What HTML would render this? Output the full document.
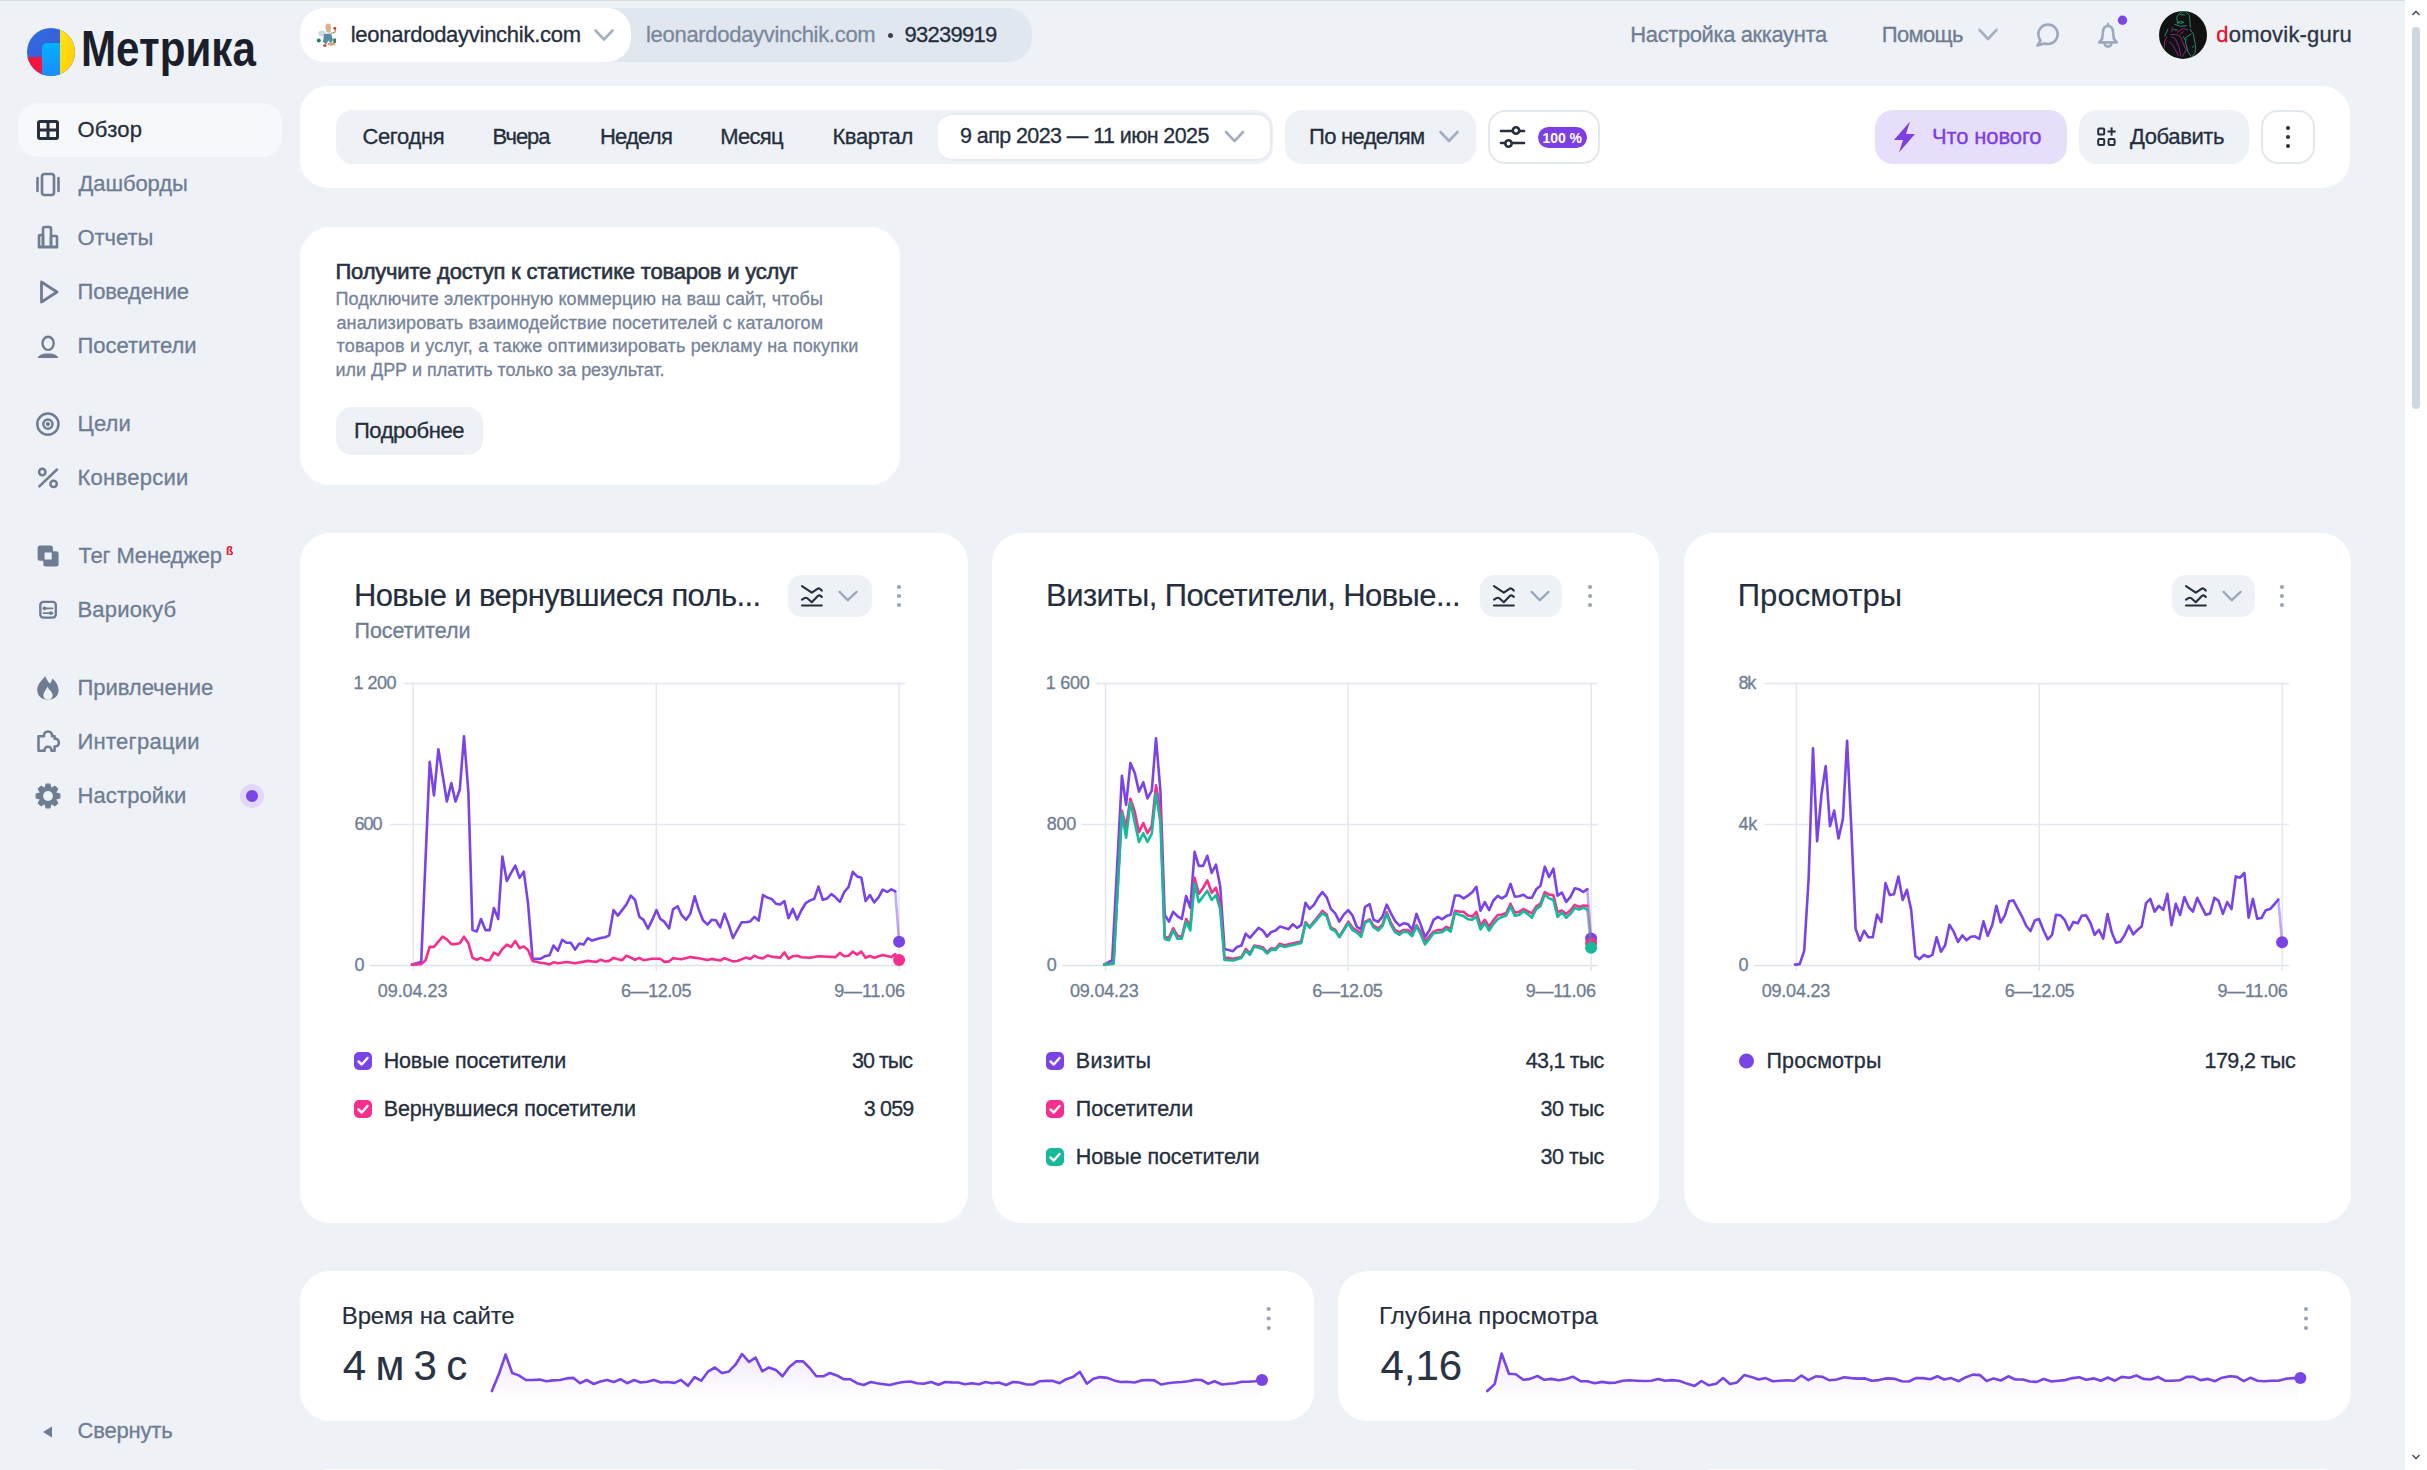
<!DOCTYPE html>
<html><head><meta charset="utf-8"><title>Метрика</title><style>
*{margin:0;padding:0;box-sizing:border-box}
html,body{width:2427px;height:1470px;overflow:hidden;background:#eef1f6;font-family:"Liberation Sans", sans-serif}
.t{position:absolute;white-space:nowrap}
svg.full{position:absolute;left:0;top:0;width:2427px;height:1470px}
</style></head>
<body>
<div style="position:absolute;left:0px;top:0px;width:2405px;height:1px;background:#d6dce6;border-radius:0px;"></div>
<div style="position:absolute;left:2405px;top:0px;width:22px;height:1470px;background:#ffffff;border-radius:0px;"></div>
<div style="position:absolute;left:2412px;top:27px;width:8px;height:382px;background:#cfd8e1;border-radius:4px;"></div>
<div style="position:absolute;left:18px;top:103px;width:264px;height:54px;background:#f7f8fb;border-radius:20px;"></div>
<div class="t" style="left:77.50px;top:118.60px;font-size:22px;line-height:22px;color:#252e3d;font-weight:400;letter-spacing:0.249px;-webkit-text-stroke-width:0.3px;">Обзор</div>
<div class="t" style="left:78.50px;top:172.60px;font-size:22px;line-height:22px;color:#6f7d93;font-weight:400;letter-spacing:-0.112px;-webkit-text-stroke-width:0.3px;">Дашборды</div>
<div class="t" style="left:77.50px;top:226.60px;font-size:22px;line-height:22px;color:#6f7d93;font-weight:400;letter-spacing:-0.066px;-webkit-text-stroke-width:0.3px;">Отчеты</div>
<div class="t" style="left:77.50px;top:280.60px;font-size:22px;line-height:22px;color:#6f7d93;font-weight:400;letter-spacing:-0.181px;-webkit-text-stroke-width:0.3px;">Поведение</div>
<div class="t" style="left:77.50px;top:334.60px;font-size:22px;line-height:22px;color:#6f7d93;font-weight:400;letter-spacing:-0.032px;-webkit-text-stroke-width:0.3px;">Посетители</div>
<div class="t" style="left:77.50px;top:412.60px;font-size:22px;line-height:22px;color:#6f7d93;font-weight:400;letter-spacing:0.128px;-webkit-text-stroke-width:0.3px;">Цели</div>
<div class="t" style="left:77.50px;top:466.60px;font-size:22px;line-height:22px;color:#6f7d93;font-weight:400;letter-spacing:0.275px;-webkit-text-stroke-width:0.3px;">Конверсии</div>
<div class="t" style="left:78.50px;top:544.60px;font-size:22px;line-height:22px;color:#6f7d93;font-weight:400;letter-spacing:-0.161px;-webkit-text-stroke-width:0.3px;">Тег Менеджер</div>
<div class="t" style="left:77.50px;top:598.60px;font-size:22px;line-height:22px;color:#6f7d93;font-weight:400;letter-spacing:0.173px;-webkit-text-stroke-width:0.3px;">Вариокуб</div>
<div class="t" style="left:77.50px;top:676.60px;font-size:22px;line-height:22px;color:#6f7d93;font-weight:400;letter-spacing:-0.040px;-webkit-text-stroke-width:0.3px;">Привлечение</div>
<div class="t" style="left:77.50px;top:730.60px;font-size:22px;line-height:22px;color:#6f7d93;font-weight:400;letter-spacing:0.265px;-webkit-text-stroke-width:0.3px;">Интеграции</div>
<div class="t" style="left:77.50px;top:784.60px;font-size:22px;line-height:22px;color:#6f7d93;font-weight:400;letter-spacing:0.115px;-webkit-text-stroke-width:0.3px;">Настройки</div>
<div class="t" style="left:77.50px;top:1420.30px;font-size:22px;line-height:22px;color:#6f7d93;font-weight:400;letter-spacing:-0.189px;-webkit-text-stroke-width:0.3px;">Свернуть</div>
<div class="t" style="left:226.00px;top:544.80px;font-size:12px;line-height:12px;color:#e0102a;font-weight:700;letter-spacing:0.000px;-webkit-text-stroke-width:0px;">ß</div>
<div style="position:absolute;left:240px;top:784px;width:24px;height:24px;border-radius:12px;background:#e3d8fb"></div>
<div style="position:absolute;left:246px;top:790px;width:12px;height:12px;border-radius:6px;background:#7b45e8"></div>
<div class="t" style="left:81.07px;top:23.50px;font-size:50px;line-height:50px;font-weight:700;color:#1b1f2b;transform:scaleX(0.843);transform-origin:0 0">Метрика</div>
<div style="position:absolute;left:300px;top:8px;width:732px;height:54px;background:#e1e7ef;border-radius:24px;"></div>
<div style="position:absolute;left:300px;top:8px;width:331px;height:54px;background:#ffffff;border-radius:24px;"></div>
<div class="t" style="left:350.70px;top:23.60px;font-size:22px;line-height:22px;color:#252e3d;font-weight:400;letter-spacing:-0.271px;-webkit-text-stroke-width:0.3px;">leonardodayvinchik.com</div>
<div class="t" style="left:646.00px;top:23.60px;font-size:22px;line-height:22px;color:#7b889c;font-weight:400;letter-spacing:-0.304px;-webkit-text-stroke-width:0.3px;">leonardodayvinchik.com</div>
<div style="position:absolute;left:887.5px;top:33px;width:5px;height:5px;border-radius:3px;background:#3a4252"></div>
<div class="t" style="left:904.40px;top:23.60px;font-size:22px;line-height:22px;color:#252e3d;font-weight:400;letter-spacing:-0.735px;-webkit-text-stroke-width:0.3px;">93239919</div>
<div class="t" style="left:1630.30px;top:23.60px;font-size:22px;line-height:22px;color:#6f7d93;font-weight:400;letter-spacing:-0.397px;-webkit-text-stroke-width:0.3px;">Настройка аккаунта</div>
<div class="t" style="left:1881.80px;top:23.60px;font-size:22px;line-height:22px;color:#6f7d93;font-weight:400;letter-spacing:-0.662px;-webkit-text-stroke-width:0.3px;">Помощь</div>
<div class="t" style="left:2216.30px;top:23.60px;font-size:22px;line-height:22px;color:#2b3444;font-weight:400;letter-spacing:0.196px;-webkit-text-stroke-width:0.3px;"><span style="color:#e3102c">d</span>omovik-guru</div>
<div style="position:absolute;left:300px;top:86px;width:2050px;height:102px;background:#ffffff;border-radius:28px;"></div>
<div style="position:absolute;left:336px;top:110px;width:937px;height:54px;background:#eef1f6;border-radius:17px;"></div>
<div style="position:absolute;left:938px;top:113px;width:334px;height:48px;background:#fff;border-radius:15px;border:2px solid #e6eaf1;border-left:none"></div>
<div class="t" style="left:362.40px;top:125.90px;font-size:22px;line-height:22px;color:#252e3d;font-weight:400;letter-spacing:-0.334px;-webkit-text-stroke-width:0.3px;">Сегодня</div>
<div class="t" style="left:492.60px;top:125.90px;font-size:22px;line-height:22px;color:#252e3d;font-weight:400;letter-spacing:-1.044px;-webkit-text-stroke-width:0.3px;">Вчера</div>
<div class="t" style="left:600.00px;top:125.90px;font-size:22px;line-height:22px;color:#252e3d;font-weight:400;letter-spacing:-0.784px;-webkit-text-stroke-width:0.3px;">Неделя</div>
<div class="t" style="left:720.30px;top:125.90px;font-size:22px;line-height:22px;color:#252e3d;font-weight:400;letter-spacing:-0.755px;-webkit-text-stroke-width:0.3px;">Месяц</div>
<div class="t" style="left:832.40px;top:125.90px;font-size:22px;line-height:22px;color:#252e3d;font-weight:400;letter-spacing:-0.368px;-webkit-text-stroke-width:0.3px;">Квартал</div>
<div class="t" style="left:960.00px;top:126.12px;font-size:21.5px;line-height:21.5px;color:#252e3d;font-weight:400;letter-spacing:-0.582px;-webkit-text-stroke-width:0.3px;">9 апр 2023 — 11 июн 2025</div>
<div style="position:absolute;left:1285px;top:110px;width:191px;height:54px;background:#eef1f6;border-radius:17px;"></div>
<div class="t" style="left:1309.00px;top:125.90px;font-size:22px;line-height:22px;color:#252e3d;font-weight:400;letter-spacing:-0.684px;-webkit-text-stroke-width:0.3px;">По неделям</div>
<div style="position:absolute;left:1488px;top:110px;width:112px;height:54px;border-radius:17px;border:2px solid #e3e7ee;background:#fff"></div>
<div style="position:absolute;left:1538px;top:127px;width:49px;height:21px;border-radius:11px;background:#7b3fe4"></div>
<div class="t" style="left:1542.50px;top:130.90px;font-size:14px;line-height:14px;color:#ffffff;font-weight:700;letter-spacing:-0.062px;-webkit-text-stroke-width:0px;">100 %</div>
<div style="position:absolute;left:1875px;top:110px;width:192px;height:54px;background:#e7defb;border-radius:18px;"></div>
<div class="t" style="left:1932.00px;top:126.10px;font-size:22px;line-height:22px;color:#7c3fe4;font-weight:400;letter-spacing:-0.127px;-webkit-text-stroke-width:0.3px;-webkit-text-stroke:0.35px #7c3fe4;">Что нового</div>
<div style="position:absolute;left:2079px;top:110px;width:170px;height:54px;background:#eef1f6;border-radius:18px;"></div>
<div class="t" style="left:2130.00px;top:125.90px;font-size:22px;line-height:22px;color:#252e3d;font-weight:400;letter-spacing:-0.395px;-webkit-text-stroke-width:0.3px;">Добавить</div>
<div style="position:absolute;left:2261px;top:110px;width:54px;height:54px;border-radius:17px;border:2px solid #e3e7ee;background:#fff"></div>
<div style="position:absolute;left:300px;top:227px;width:600px;height:258px;background:#ffffff;border-radius:30px;"></div>
<div class="t" style="left:335.50px;top:260.60px;font-size:22px;line-height:22px;color:#2a3342;font-weight:400;letter-spacing:-0.198px;-webkit-text-stroke-width:0.3px;-webkit-text-stroke:0.6px #2a3342;">Получите доступ к статистике товаров и услуг</div>
<div class="t" style="left:335.50px;top:289.70px;font-size:18px;line-height:18px;color:#76839a;font-weight:400;letter-spacing:0.114px;-webkit-text-stroke-width:0.3px;">Подключите электронную коммерцию на ваш сайт, чтобы</div>
<div class="t" style="left:336.50px;top:313.50px;font-size:18px;line-height:18px;color:#76839a;font-weight:400;letter-spacing:0.104px;-webkit-text-stroke-width:0.3px;">анализировать взаимодействие посетителей с каталогом</div>
<div class="t" style="left:336.50px;top:337.30px;font-size:18px;line-height:18px;color:#76839a;font-weight:400;letter-spacing:0.175px;-webkit-text-stroke-width:0.3px;">товаров и услуг, а также оптимизировать рекламу на покупки</div>
<div class="t" style="left:335.50px;top:361.10px;font-size:18px;line-height:18px;color:#76839a;font-weight:400;letter-spacing:-0.033px;-webkit-text-stroke-width:0.3px;">или ДРР и платить только за результат.</div>
<div style="position:absolute;left:336px;top:407px;width:147px;height:48px;background:#eef1f6;border-radius:16px;"></div>
<div class="t" style="left:354.00px;top:419.70px;font-size:22px;line-height:22px;color:#252e3d;font-weight:400;letter-spacing:-0.457px;-webkit-text-stroke-width:0.3px;">Подробнее</div>
<div style="position:absolute;left:300px;top:533px;width:668px;height:690px;background:#ffffff;border-radius:30px;"></div>
<div class="t" style="left:353.90px;top:579.65px;font-size:31px;line-height:31px;color:#252e3d;font-weight:400;letter-spacing:-0.634px;-webkit-text-stroke-width:0.15px;">Новые и вернувшиеся поль...</div>
<div class="t" style="left:354.50px;top:620.93px;font-size:21.5px;line-height:21.5px;color:#6f7d93;font-weight:400;letter-spacing:-0.073px;-webkit-text-stroke-width:0.3px;">Посетители</div>
<div style="position:absolute;left:788px;top:575px;width:84px;height:42px;background:#eef1f6;border-radius:14px;"></div>
<div class="t" style="left:353.60px;top:673.50px;font-size:18px;line-height:18px;color:#6f7d93;font-weight:400;letter-spacing:-0.533px;-webkit-text-stroke-width:0.3px;">1 200</div>
<div class="t" style="left:354.60px;top:814.50px;font-size:18px;line-height:18px;color:#6f7d93;font-weight:400;letter-spacing:-1.061px;-webkit-text-stroke-width:0.3px;">600</div>
<div class="t" style="left:354.60px;top:955.50px;font-size:18px;line-height:18px;color:#6f7d93;font-weight:400;letter-spacing:-0.300px;-webkit-text-stroke-width:0.3px;">0</div>
<div class="t" style="left:383.70px;top:1050.92px;font-size:21.5px;line-height:21.5px;color:#252e3d;font-weight:400;letter-spacing:-0.176px;-webkit-text-stroke-width:0.3px;">Новые посетители</div>
<div class="t" style="left:852.10px;top:1050.92px;font-size:21.5px;line-height:21.5px;color:#252e3d;font-weight:400;letter-spacing:-0.998px;-webkit-text-stroke-width:0.3px;">30 тыс</div>
<div class="t" style="left:383.70px;top:1098.92px;font-size:21.5px;line-height:21.5px;color:#252e3d;font-weight:400;letter-spacing:-0.120px;-webkit-text-stroke-width:0.3px;">Вернувшиеся посетители</div>
<div class="t" style="left:863.80px;top:1098.92px;font-size:21.5px;line-height:21.5px;color:#252e3d;font-weight:400;letter-spacing:-0.836px;-webkit-text-stroke-width:0.3px;">3 059</div>
<div class="t" style="left:377.75px;top:981.50px;font-size:18px;line-height:18px;color:#6f7d93;font-weight:400;letter-spacing:-0.051px;-webkit-text-stroke-width:0.3px;">09.04.23</div>
<div class="t" style="left:621.00px;top:981.50px;font-size:18px;line-height:18px;color:#6f7d93;font-weight:400;letter-spacing:-0.441px;-webkit-text-stroke-width:0.3px;">6—12.05</div>
<div class="t" style="left:834.20px;top:981.50px;font-size:18px;line-height:18px;color:#6f7d93;font-weight:400;letter-spacing:-0.151px;-webkit-text-stroke-width:0.3px;">9—11.06</div>
<div style="position:absolute;left:992px;top:533px;width:667px;height:690px;background:#ffffff;border-radius:30px;"></div>
<div class="t" style="left:1046.10px;top:579.65px;font-size:31px;line-height:31px;color:#252e3d;font-weight:400;letter-spacing:-0.578px;-webkit-text-stroke-width:0.15px;">Визиты, Посетители, Новые...</div>
<div style="position:absolute;left:1480px;top:575px;width:82px;height:42px;background:#eef1f6;border-radius:14px;"></div>
<div class="t" style="left:1045.80px;top:673.50px;font-size:18px;line-height:18px;color:#6f7d93;font-weight:400;letter-spacing:-0.300px;-webkit-text-stroke-width:0.3px;">1 600</div>
<div class="t" style="left:1046.80px;top:814.50px;font-size:18px;line-height:18px;color:#6f7d93;font-weight:400;letter-spacing:-0.300px;-webkit-text-stroke-width:0.3px;">800</div>
<div class="t" style="left:1046.80px;top:955.50px;font-size:18px;line-height:18px;color:#6f7d93;font-weight:400;letter-spacing:-0.300px;-webkit-text-stroke-width:0.3px;">0</div>
<div class="t" style="left:1075.70px;top:1050.92px;font-size:21.5px;line-height:21.5px;color:#252e3d;font-weight:400;letter-spacing:0.367px;-webkit-text-stroke-width:0.3px;">Визиты</div>
<div class="t" style="left:1525.80px;top:1050.92px;font-size:21.5px;line-height:21.5px;color:#252e3d;font-weight:400;letter-spacing:-0.760px;-webkit-text-stroke-width:0.3px;">43,1 тыс</div>
<div class="t" style="left:1075.70px;top:1098.92px;font-size:21.5px;line-height:21.5px;color:#252e3d;font-weight:400;letter-spacing:0.094px;-webkit-text-stroke-width:0.3px;">Посетители</div>
<div class="t" style="left:1540.41px;top:1098.92px;font-size:21.5px;line-height:21.5px;color:#252e3d;font-weight:400;letter-spacing:-0.400px;-webkit-text-stroke-width:0.3px;">30 тыс</div>
<div class="t" style="left:1075.70px;top:1146.92px;font-size:21.5px;line-height:21.5px;color:#252e3d;font-weight:400;letter-spacing:-0.089px;-webkit-text-stroke-width:0.3px;">Новые посетители</div>
<div class="t" style="left:1540.41px;top:1146.92px;font-size:21.5px;line-height:21.5px;color:#252e3d;font-weight:400;letter-spacing:-0.400px;-webkit-text-stroke-width:0.3px;">30 тыс</div>
<div class="t" style="left:1069.95px;top:981.50px;font-size:18px;line-height:18px;color:#6f7d93;font-weight:400;letter-spacing:-0.194px;-webkit-text-stroke-width:0.3px;">09.04.23</div>
<div class="t" style="left:1312.35px;top:981.50px;font-size:18px;line-height:18px;color:#6f7d93;font-weight:400;letter-spacing:-0.424px;-webkit-text-stroke-width:0.3px;">6—12.05</div>
<div class="t" style="left:1525.70px;top:981.50px;font-size:18px;line-height:18px;color:#6f7d93;font-weight:400;letter-spacing:-0.235px;-webkit-text-stroke-width:0.3px;">9—11.06</div>
<div style="position:absolute;left:1684px;top:533px;width:667px;height:690px;background:#ffffff;border-radius:30px;"></div>
<div class="t" style="left:1737.80px;top:579.65px;font-size:31px;line-height:31px;color:#252e3d;font-weight:400;letter-spacing:0.041px;-webkit-text-stroke-width:0.15px;">Просмотры</div>
<div style="position:absolute;left:2172px;top:575px;width:83px;height:42px;background:#eef1f6;border-radius:14px;"></div>
<div class="t" style="left:1738.50px;top:673.50px;font-size:18px;line-height:18px;color:#6f7d93;font-weight:400;letter-spacing:-1.311px;-webkit-text-stroke-width:0.3px;">8k</div>
<div class="t" style="left:1738.50px;top:814.50px;font-size:18px;line-height:18px;color:#6f7d93;font-weight:400;letter-spacing:-0.300px;-webkit-text-stroke-width:0.3px;">4k</div>
<div class="t" style="left:1738.50px;top:955.50px;font-size:18px;line-height:18px;color:#6f7d93;font-weight:400;letter-spacing:-0.300px;-webkit-text-stroke-width:0.3px;">0</div>
<div class="t" style="left:1766.40px;top:1050.92px;font-size:21.5px;line-height:21.5px;color:#252e3d;font-weight:400;letter-spacing:0.164px;-webkit-text-stroke-width:0.3px;">Просмотры</div>
<div class="t" style="left:2204.50px;top:1050.92px;font-size:21.5px;line-height:21.5px;color:#252e3d;font-weight:400;letter-spacing:-0.572px;-webkit-text-stroke-width:0.3px;">179,2 тыс</div>
<div class="t" style="left:1761.65px;top:981.50px;font-size:18px;line-height:18px;color:#6f7d93;font-weight:400;letter-spacing:-0.194px;-webkit-text-stroke-width:0.3px;">09.04.23</div>
<div class="t" style="left:2004.80px;top:981.50px;font-size:18px;line-height:18px;color:#6f7d93;font-weight:400;letter-spacing:-0.541px;-webkit-text-stroke-width:0.3px;">6—12.05</div>
<div class="t" style="left:2217.40px;top:981.50px;font-size:18px;line-height:18px;color:#6f7d93;font-weight:400;letter-spacing:-0.218px;-webkit-text-stroke-width:0.3px;">9—11.06</div>
<div style="position:absolute;left:300px;top:1469px;width:668px;height:131px;background:#ffffff;border-radius:30px;"></div>
<div style="position:absolute;left:992px;top:1469px;width:667px;height:131px;background:#ffffff;border-radius:30px;"></div>
<div style="position:absolute;left:1684px;top:1469px;width:667px;height:131px;background:#ffffff;border-radius:30px;"></div>
<div style="position:absolute;left:300px;top:1271px;width:1014px;height:150px;background:#ffffff;border-radius:30px;"></div>
<div style="position:absolute;left:1338px;top:1271px;width:1013px;height:150px;background:#ffffff;border-radius:30px;"></div>
<div class="t" style="left:341.80px;top:1303.90px;font-size:24px;line-height:24px;color:#252e3d;font-weight:400;letter-spacing:-0.170px;-webkit-text-stroke-width:0.15px;">Время на сайте</div>
<div class="t" style="left:342.80px;top:1345.10px;font-size:42px;line-height:42px;color:#2a3343;font-weight:400;letter-spacing:-1.200px;-webkit-text-stroke-width:0.1px;-webkit-text-stroke-width:0.1px;">4 м 3 с</div>
<div class="t" style="left:1379.00px;top:1303.90px;font-size:24px;line-height:24px;color:#252e3d;font-weight:400;letter-spacing:0.119px;-webkit-text-stroke-width:0.15px;">Глубина просмотра</div>
<div class="t" style="left:1380.50px;top:1345.10px;font-size:42px;line-height:42px;color:#2a3343;font-weight:400;letter-spacing:-0.062px;-webkit-text-stroke-width:0.1px;-webkit-text-stroke-width:0.1px;">4,16</div>
<svg class="full" width="2427" height="1470" viewBox="0 0 2427 1470">
<defs>
<linearGradient id="lgb" x1="0" y1="0" x2="1" y2="1"><stop offset="0" stop-color="#2f6fe6"/><stop offset="1" stop-color="#3f4fc9"/></linearGradient>
<linearGradient id="lgy" x1="0" y1="0" x2="1" y2="1"><stop offset="0" stop-color="#ffe51f"/><stop offset="1" stop-color="#ffc800"/></linearGradient>
<linearGradient id="lgc" x1="0" y1="0" x2="0" y2="1"><stop offset="0" stop-color="#00b2ff"/><stop offset="1" stop-color="#1a8cff"/></linearGradient>
<clipPath id="lc"><circle cx="51" cy="52" r="24"/></clipPath>
<linearGradient id="spf" x1="0" y1="0" x2="0" y2="1"><stop offset="0" stop-color="#7a43e6" stop-opacity="0.11"/><stop offset="1" stop-color="#7a43e6" stop-opacity="0"/></linearGradient>
</defs>
<g clip-path="url(#lc)"><rect x="27" y="28" width="48" height="48" fill="url(#lgb)"/><rect x="60" y="28" width="16" height="48" fill="url(#lgy)"/><rect x="26" y="57" width="17" height="20" fill="#f5153f"/><path d="M42,76 L42,48 Q42,43 47,43 L60,43 L60,76 Z" fill="url(#lgc)"/></g>
<g fill="none" stroke="#252e3d" stroke-width="3"><rect x="38.5" y="121.5" width="19" height="17" rx="1.5"/><line x1="48" y1="121.5" x2="48" y2="138.5"/><line x1="38.5" y1="130" x2="57.5" y2="130"/></g>
<g fill="none" stroke="#6f7d93" stroke-width="2.6" stroke-linecap="round"><rect x="42" y="174" width="12" height="21" rx="2.5"/><line x1="37.5" y1="178" x2="37.5" y2="191"/><line x1="58.5" y1="178" x2="58.5" y2="191"/></g>
<g fill="none" stroke="#6f7d93" stroke-width="2.6" stroke-linejoin="round"><path d="M39,247 L39,236 Q39,235 40,235 L43,235 L43,247 Z"/><path d="M43,247 L43,229 Q43,227 45,227 L49,227 Q51,227 51,229 L51,247 Z"/><path d="M51,247 L51,236 L56,236 Q57,236 57,237 L57,247 Z"/><line x1="38" y1="247" x2="58" y2="247"/></g>
<path d="M41.5,282 L57,292 L41.5,302 Z" fill="none" stroke="#6f7d93" stroke-width="2.8" stroke-linejoin="round"/>
<g fill="none" stroke="#6f7d93" stroke-width="2.4"><ellipse cx="48.1" cy="343.3" rx="5.6" ry="6.6"/></g><path d="M37.4,357.9 C40,353.6 44,353.4 48,353.4 C52,353.4 56,353.6 58.6,357.9 Z" fill="#6f7d93"/>
<g fill="none" stroke="#6f7d93" stroke-width="2.5"><circle cx="47.9" cy="424.1" r="10.6"/><circle cx="47.9" cy="424.1" r="4.6"/></g><circle cx="47.9" cy="424.1" r="2.1" fill="#6f7d93"/>
<g fill="none" stroke="#6f7d93" stroke-width="2.5" stroke-linecap="round"><line x1="39.3" y1="486.4" x2="57" y2="469.5"/><circle cx="42.3" cy="472" r="3.2"/><circle cx="53.6" cy="483.9" r="3.2"/></g>
<g fill="#6f7d93"><rect x="37.6" y="545.5" width="15.3" height="15.2" rx="2.5"/><rect x="43.3" y="551.2" width="15.3" height="15.2" rx="2.5"/></g><rect x="44.6" y="552.5" width="7.1" height="7" fill="#eef1f6"/>
<g fill="none" stroke="#6f7d93" stroke-width="2.4"><rect x="40.3" y="601.9" width="15.5" height="15.7" rx="3"/></g><g stroke="#6f7d93" stroke-width="1.8" stroke-linecap="round"><line x1="43.5" y1="608.3" x2="52.5" y2="608.3"/><line x1="43.5" y1="613.1" x2="52.5" y2="613.1"/></g><circle cx="44.6" cy="608.3" r="1.9" fill="#6f7d93"/><circle cx="50.9" cy="613.1" r="1.9" fill="#6f7d93"/>
<path d="M48,699.8 C41.5,699.8 37.2,695.5 37.2,690 C37.2,684 42,680.5 45.2,676 C46.8,680 48.3,682.2 50.2,683.8 C51.2,681.8 52,680.3 52.6,678.6 C56.2,682 58.6,686 58.6,690.5 C58.6,695.5 54.5,699.8 48,699.8 Z" fill="#6f7d93"/><path d="M47.8,699.8 C45,699.8 43.3,697.6 43.3,695.3 C43.3,692.3 46,690.2 47.6,686.8 C48.6,689.3 50.2,690.6 51.2,691.8 C52.2,693 52.6,694.3 52.6,695.5 C52.6,697.6 50.8,699.8 47.8,699.8 Z" fill="#eef1f6"/>
<path d="M38.5,750.8 L38.5,736.2 L44,736.2 C43.6,732.8 45.6,731.4 48,731.4 C50.4,731.4 52.4,732.8 52,736.2 L54.6,736.2 L54.6,738.8 C57.6,738.4 58.9,740.6 58.9,742.6 C58.9,744.6 57.6,746.8 54.6,746.4 L54.6,750.8 L51.4,750.8 C51.6,748 50.2,746.8 48,746.8 C45.8,746.8 44.4,748 44.6,750.8 Z" fill="none" stroke="#6f7d93" stroke-width="2.5" stroke-linejoin="round"/>
<path d="M45.1,787.9 L46.1,784.2 L49.9,784.2 L50.9,787.9 L51.7,788.2 L55.0,786.3 L57.7,789.0 L55.8,792.3 L56.1,793.1 L59.8,794.1 L59.8,797.9 L56.1,798.9 L55.8,799.7 L57.7,803.0 L55.0,805.7 L51.7,803.8 L50.9,804.1 L49.9,807.8 L46.1,807.8 L45.1,804.1 L44.3,803.8 L41.0,805.7 L38.3,803.0 L40.2,799.7 L39.9,798.9 L36.2,797.9 L36.2,794.1 L39.9,793.1 L40.2,792.3 L38.3,789.0 L41.0,786.3 L44.3,788.2 Z" fill="#6f7d93" stroke="#6f7d93" stroke-width="1.2" stroke-linejoin="round"/><circle cx="48" cy="796" r="4.9" fill="#eef1f6"/>
<path d="M43,1432 L52,1426.5 L52,1437.5 Z" fill="#6f7d93"/>
<g fill="none" stroke="#a4afc0" stroke-width="2.6" stroke-linecap="round" stroke-linejoin="round"><path d="M595.5,30.5 L604,39.5 L612.5,30.5"/><path d="M1979.5,30 L1988,39 L1996.5,30"/></g>
<path d="M2044.2,43.5 C2045.4,43.8 2046.7,44 2048,44 C2053.4,44 2057.7,39.7 2057.7,34.3 C2057.7,28.9 2053.4,24.6 2048,24.6 C2042.6,24.6 2038.3,28.9 2038.3,34.3 C2038.3,36.7 2039.1,38.8 2040.5,40.5 L2037.5,45.6 Z" fill="none" stroke="#9ea9bb" stroke-width="2.6" stroke-linejoin="round"/>
<path d="M2099.3,42.4 L2102.2,38.6 L2102.9,31.8 C2103.3,28 2105.3,26 2108,26 C2110.7,26 2112.7,28 2113.1,31.8 L2113.8,38.6 L2116.7,42.4 Z" fill="none" stroke="#9ea9bb" stroke-width="2.6" stroke-linejoin="round"/><path d="M2104.6,42.6 C2104.6,45.2 2106,46.6 2108,46.6 C2110,46.6 2111.4,45.2 2111.4,42.6" fill="none" stroke="#9ea9bb" stroke-width="2.6"/><path d="M2106.8,26 L2108,23 L2109.2,26 Z" fill="#9ea9bb" stroke="#9ea9bb" stroke-width="1.2" stroke-linejoin="round"/>
<circle cx="2122.5" cy="20.3" r="4.7" fill="#7b45e8"/>
<circle cx="2183" cy="34.9" r="24" fill="#111111"/>
<g fill="none" stroke="#268a72" stroke-width="1.0" stroke-linejoin="round"><path d="M2177.8,24.2 L2176.7,17.2 L2180.7,12.0 L2185.5,11.7 L2189.5,15.4 L2190.3,27.5"/><path d="M2174.5,24.2 L2180.7,26.4 L2186.6,25.5"/><path d="M2177.8,22.3 L2180.7,21.2 L2183.7,22.3 L2180.7,23.4 L2177.8,22.3"/><path d="M2180.0,14.6 L2185.1,15.0"/><path d="M2189.9,28.9 L2193.2,33.7 L2195.4,44.8 L2195.4,52.1 L2191.8,57.2"/><path d="M2164.6,36.7 L2167.9,28.9"/><path d="M2191.4,33.7 L2186.2,37.4 L2185.5,42.9 L2188.1,52.1 L2191.4,56.5"/><path d="M2183.3,36.3 L2185.1,40.0"/><path d="M2173.4,29.7 L2177.4,30.1"/><path d="M2192.5,47.7 L2194.0,45.5"/></g>
<g fill="none" stroke="#86237f" stroke-width="1.0" stroke-linejoin="round"><path d="M2164.2,48.4 L2164.6,41.1 L2167.1,36.7"/><path d="M2170.4,34.5 L2175.9,34.5 L2180.7,36.7 L2182.9,42.9 L2186.2,50.3 L2181.8,56.9"/><path d="M2177.1,32.3 L2182.9,28.6 L2188.1,29.7"/><path d="M2169.0,41.8 L2172.6,44.8 L2175.6,50.3 L2178.5,55.8"/><path d="M2171.5,36.7 L2175.6,39.2 L2178.9,46.6 L2180.7,55.8"/><path d="M2172.3,27.1 L2171.9,31.9"/><path d="M2180.0,34.5 L2183.7,31.5"/></g>
<g><ellipse cx="322" cy="33.5" rx="3.8" ry="3" fill="#cfdde2"/><path d="M324,34 L331,33.5 L333,40 L331,43.5 L328.5,40.5 L326,44.5 L323,42 Z" fill="#5d8ba6"/><ellipse cx="328.2" cy="27.4" rx="2.8" ry="3.8" fill="#e6ad88"/><ellipse cx="328.5" cy="31" rx="2.6" ry="1.8" fill="#cdbb9c"/><path d="M331,33.5 L335,32 L335.5,28" fill="none" stroke="#b98a6e" stroke-width="1.3"/><circle cx="334.8" cy="28.3" r="1.4" fill="#d8342f"/><circle cx="318.8" cy="40.5" r="2" fill="#2f7a5a"/><rect x="333.3" y="38.5" width="2.6" height="4.5" fill="#2f7a5a"/><ellipse cx="331.5" cy="44.2" rx="4" ry="1.4" fill="#d0a27a"/><ellipse cx="324.8" cy="45.6" rx="1.8" ry="1.4" fill="#b0583a"/></g>
<g fill="none" stroke="#a4afc0" stroke-width="2.6" stroke-linecap="round" stroke-linejoin="round"><path d="M1226,132 L1234.5,141 L1243,132"/><path d="M1440.5,132 L1449,141 L1457.5,132"/></g>
<g stroke="#252e3d" stroke-width="2.6" fill="#fff" stroke-linecap="round"><line x1="1501" y1="131" x2="1524" y2="131"/><line x1="1501" y1="143" x2="1524" y2="143"/><circle cx="1516" cy="130.5" r="3.2"/><circle cx="1508.5" cy="143.5" r="3.2"/></g>
<path d="M1910,121.5 L1894,140 L1903,140 L1899,152.5 L1915,134 L1906,134 Z" fill="#7b3fe4"/>
<g fill="none" stroke="#252e3d" stroke-width="2"><rect x="2098.2" y="128.6" width="6" height="6" rx="1.2"/><rect x="2098.2" y="139" width="6" height="6" rx="1.2"/><rect x="2108.6" y="139" width="6" height="6" rx="1.2"/><line x1="2111.6" y1="127.4" x2="2111.6" y2="135.6"/><line x1="2107.5" y1="131.5" x2="2115.7" y2="131.5"/></g>
<g fill="#252e3d"><circle cx="2288" cy="128" r="2"/><circle cx="2288" cy="137" r="2"/><circle cx="2288" cy="146" r="2"/></g>
<g fill="none" stroke="#252e3d" stroke-width="2.1" stroke-linecap="round" stroke-linejoin="round"><path d="M802,586.2 L811.8,592.7 L817.8,588.6 Q819.5,587.6 821.8,590.6"/><path d="M802,599.6 Q805.5,597 807,598 L811.8,602.2 L818.3,595.6 Q820,594.6 821.8,597"/><line x1="802" y1="605.5" x2="821.8" y2="605.5"/></g>
<path d="M839.6,591.9 L847.8000000000001,600.2 L856.6,591.9" fill="none" stroke="#9aa6bb" stroke-width="2.3" stroke-linecap="round" stroke-linejoin="round"/>
<g fill="#99a4b7"><circle cx="899" cy="587" r="2.1"/><circle cx="899" cy="596" r="2.1"/><circle cx="899" cy="605" r="2.1"/></g>
<line x1="403.5" y1="683.5" x2="905.5" y2="683.5" stroke="#e4e6f1" stroke-width="1.3"/>
<line x1="389.5" y1="824.5" x2="905.5" y2="824.5" stroke="#e4e6f1" stroke-width="1.3"/>
<line x1="370.0" y1="965.5" x2="905.5" y2="965.5" stroke="#dde1ec" stroke-width="1.3"/>
<line x1="413.3" y1="683" x2="413.3" y2="971" stroke="#e4e6f1" stroke-width="1.5"/>
<line x1="656.3" y1="683" x2="656.3" y2="971" stroke="#e4e6f1" stroke-width="1.5"/>
<line x1="899" y1="683" x2="899" y2="971" stroke="#e4e6f1" stroke-width="1.5"/>
<rect x="354" y="1052" width="18" height="18" rx="5" fill="#7a43e6"/><path d="M358.5,1061.5 L361.8,1064.5 L367.5,1058" fill="none" stroke="#fff" stroke-width="2.4" stroke-linecap="round" stroke-linejoin="round"/>
<rect x="354" y="1100" width="18" height="18" rx="5" fill="#f52f8d"/><path d="M358.5,1109.5 L361.8,1112.5 L367.5,1106" fill="none" stroke="#fff" stroke-width="2.4" stroke-linecap="round" stroke-linejoin="round"/>
<g fill="none" stroke="#252e3d" stroke-width="2.1" stroke-linecap="round" stroke-linejoin="round"><path d="M1494,586.2 L1503.8,592.7 L1509.8,588.6 Q1511.5,587.6 1513.8,590.6"/><path d="M1494,599.6 Q1497.5,597 1499,598 L1503.8,602.2 L1510.3,595.6 Q1512,594.6 1513.8,597"/><line x1="1494" y1="605.5" x2="1513.8" y2="605.5"/></g>
<path d="M1531.6,591.9 L1539.8,600.2 L1548.6,591.9" fill="none" stroke="#9aa6bb" stroke-width="2.3" stroke-linecap="round" stroke-linejoin="round"/>
<g fill="#99a4b7"><circle cx="1590" cy="587" r="2.1"/><circle cx="1590" cy="596" r="2.1"/><circle cx="1590" cy="605" r="2.1"/></g>
<line x1="1095.7" y1="683.5" x2="1597.7" y2="683.5" stroke="#e4e6f1" stroke-width="1.3"/>
<line x1="1081.7" y1="824.5" x2="1597.7" y2="824.5" stroke="#e4e6f1" stroke-width="1.3"/>
<line x1="1062.2" y1="965.5" x2="1597.7" y2="965.5" stroke="#dde1ec" stroke-width="1.3"/>
<line x1="1105.5" y1="683" x2="1105.5" y2="971" stroke="#e4e6f1" stroke-width="1.5"/>
<line x1="1348.2" y1="683" x2="1348.2" y2="971" stroke="#e4e6f1" stroke-width="1.5"/>
<line x1="1591.2" y1="683" x2="1591.2" y2="971" stroke="#e4e6f1" stroke-width="1.5"/>
<rect x="1046" y="1052" width="18" height="18" rx="5" fill="#7a43e6"/><path d="M1050.5,1061.5 L1053.8,1064.5 L1059.5,1058" fill="none" stroke="#fff" stroke-width="2.4" stroke-linecap="round" stroke-linejoin="round"/>
<rect x="1046" y="1100" width="18" height="18" rx="5" fill="#f52f8d"/><path d="M1050.5,1109.5 L1053.8,1112.5 L1059.5,1106" fill="none" stroke="#fff" stroke-width="2.4" stroke-linecap="round" stroke-linejoin="round"/>
<rect x="1046" y="1148" width="18" height="18" rx="5" fill="#16b99a"/><path d="M1050.5,1157.5 L1053.8,1160.5 L1059.5,1154" fill="none" stroke="#fff" stroke-width="2.4" stroke-linecap="round" stroke-linejoin="round"/>
<g fill="none" stroke="#252e3d" stroke-width="2.1" stroke-linecap="round" stroke-linejoin="round"><path d="M2186,586.2 L2195.8,592.7 L2201.8,588.6 Q2203.5,587.6 2205.8,590.6"/><path d="M2186,599.6 Q2189.5,597 2191,598 L2195.8,602.2 L2202.3,595.6 Q2204,594.6 2205.8,597"/><line x1="2186" y1="605.5" x2="2205.8" y2="605.5"/></g>
<path d="M2223.6,591.9 L2231.7999999999997,600.2 L2240.6,591.9" fill="none" stroke="#9aa6bb" stroke-width="2.3" stroke-linecap="round" stroke-linejoin="round"/>
<g fill="#99a4b7"><circle cx="2282" cy="587" r="2.1"/><circle cx="2282" cy="596" r="2.1"/><circle cx="2282" cy="605" r="2.1"/></g>
<line x1="1764.2" y1="683.5" x2="2288.8" y2="683.5" stroke="#e4e6f1" stroke-width="1.3"/>
<line x1="1764.2" y1="824.5" x2="2288.8" y2="824.5" stroke="#e4e6f1" stroke-width="1.3"/>
<line x1="1753.9" y1="965.5" x2="2288.8" y2="965.5" stroke="#dde1ec" stroke-width="1.3"/>
<line x1="1796.4" y1="683" x2="1796.4" y2="971" stroke="#e4e6f1" stroke-width="1.5"/>
<line x1="2039.3" y1="683" x2="2039.3" y2="971" stroke="#e4e6f1" stroke-width="1.5"/>
<line x1="2282.3" y1="683" x2="2282.3" y2="971" stroke="#e4e6f1" stroke-width="1.5"/>
<circle cx="1746.5" cy="1061" r="7.5" fill="#7a43e6"/>
<path d="M412.0,964.6 L421.2,962.0 L429.7,761.9 L434.0,795.5 L438.4,749.2 L446.9,801.5 L451.3,783.1 L455.5,801.5 L459.8,789.5 L464.0,736.3 L468.4,792.5 L472.5,930.1 L476.8,931.4 L481.0,919.0 L485.4,930.1 L489.7,930.1 L493.9,908.0 L498.2,919.0 L502.4,856.5 L506.8,880.9 L511.1,872.8 L515.3,865.7 L519.6,877.9 L523.8,871.6 L528.1,903.9 L532.6,958.8 L540.4,958.8 L544.7,956.3 L549.5,955.2 L553.5,945.5 L557.8,950.8 L562.2,939.8 L566.4,942.7 L570.7,942.7 L575.1,949.6 L579.3,943.6 L583.6,944.6 L587.8,938.1 L592.1,940.6 L596.3,939.3 L600.7,938.1 L605.2,937.2 L609.2,935.4 L613.5,910.1 L617.9,915.6 L622.1,910.1 L626.4,904.5 L630.8,895.6 L635.1,900.0 L639.3,916.7 L643.5,919.9 L648.0,928.7 L652.2,919.9 L656.5,910.1 L660.2,918.7 L664.5,921.9 L669.1,928.4 L673.0,909.4 L677.6,906.2 L681.6,915.0 L686.1,919.8 L690.4,913.4 L694.7,896.2 L698.7,909.6 L703.0,920.3 L707.5,924.6 L711.6,919.8 L715.9,920.3 L720.2,927.3 L724.5,913.7 L728.7,924.6 L733.0,938.0 L737.3,930.0 L741.6,922.3 L745.9,922.3 L750.2,921.4 L754.4,916.9 L758.7,920.6 L763.0,895.0 L767.3,897.6 L771.6,898.9 L775.9,903.7 L780.2,904.6 L784.4,901.1 L788.5,918.2 L792.8,908.9 L797.1,919.5 L801.4,910.2 L805.7,903.2 L809.9,900.5 L814.2,898.9 L818.5,886.6 L822.8,899.8 L827.1,898.4 L831.4,894.1 L835.6,897.3 L839.9,901.9 L844.2,892.0 L848.5,887.1 L852.8,871.9 L857.1,876.4 L861.4,877.8 L865.6,901.1 L869.9,895.0 L874.2,902.3 L878.5,897.3 L882.8,889.5 L887.1,892.0 L891.3,889.3 L895.3,891.4" fill="none" stroke="#7a43e6" stroke-width="2.6" stroke-linejoin="round" stroke-linecap="round"/>
<line x1="895.3" y1="891.4" x2="899.1" y2="941.8" stroke="#7a43e6" stroke-opacity="0.45" stroke-width="2.6"/>
<circle cx="899.1" cy="941.8" r="6" fill="#7a43e6"/>
<path d="M412.0,964.6 L421.2,964.1 L425.6,960.2 L429.7,946.9 L434.0,946.9 L442.6,936.7 L446.9,939.3 L451.3,944.1 L455.5,944.1 L459.8,943.2 L464.0,936.7 L468.4,943.2 L472.5,957.9 L476.8,959.7 L481.0,957.9 L485.4,960.2 L489.7,960.2 L493.9,952.6 L498.2,955.2 L502.4,949.0 L506.8,944.6 L511.1,946.9 L515.3,941.1 L519.6,948.2 L523.8,946.4 L528.1,949.9 L532.6,960.9 L540.4,962.7 L544.7,963.2 L549.5,964.4 L553.5,962.3 L557.8,963.2 L566.4,962.0 L575.1,963.2 L587.8,960.9 L596.3,962.0 L600.7,959.7 L605.2,961.4 L609.2,960.9 L613.5,957.9 L622.1,960.2 L626.4,955.6 L635.1,959.7 L639.3,957.9 L643.5,960.2 L652.2,958.8 L660.2,958.7 L664.5,961.9 L669.1,961.4 L673.0,958.2 L681.6,959.2 L690.4,957.1 L698.7,958.2 L707.5,960.0 L711.6,958.9 L720.2,960.5 L724.5,958.2 L733.0,961.4 L737.3,961.0 L745.9,957.6 L750.2,958.9 L754.4,955.7 L758.7,957.8 L763.0,958.4 L767.3,955.5 L771.6,956.6 L780.2,957.8 L784.4,952.3 L788.5,958.9 L792.8,956.2 L797.1,955.7 L801.4,957.3 L809.9,957.8 L818.5,956.2 L835.6,957.1 L839.9,952.8 L844.2,956.2 L848.5,955.7 L852.8,951.7 L857.1,954.6 L861.4,951.7 L865.6,957.8 L869.9,956.0 L874.2,957.8 L882.8,954.9 L891.3,957.1 L895.3,954.1" fill="none" stroke="#f52f8d" stroke-width="2.6" stroke-linejoin="round" stroke-linecap="round"/>
<line x1="895.3" y1="954.1" x2="899.1" y2="960.0" stroke="#f52f8d" stroke-opacity="0.45" stroke-width="2.6"/>
<circle cx="899.1" cy="960.0" r="6" fill="#f52f8d"/>
<path d="M1104.2,964.6 L1112.2,960.2 L1121.9,775.7 L1126.1,804.9 L1130.4,763.0 L1134.8,773.1 L1139.0,791.6 L1143.3,782.3 L1147.5,798.4 L1151.8,790.7 L1156.0,738.2 L1160.4,790.7 L1164.7,914.6 L1168.9,921.6 L1173.2,911.9 L1177.6,916.3 L1181.8,919.0 L1186.1,896.0 L1190.3,907.8 L1194.6,851.8 L1198.8,865.9 L1203.1,865.9 L1207.3,855.8 L1211.7,873.0 L1216.0,864.7 L1220.2,886.3 L1224.5,949.0 L1228.7,949.9 L1233.0,951.2 L1236.5,947.3 L1241.4,945.5 L1245.7,933.7 L1249.9,937.9 L1254.2,932.8 L1258.6,927.8 L1262.8,930.5 L1267.1,936.7 L1271.3,931.9 L1275.6,930.5 L1279.8,926.6 L1284.2,927.8 L1288.5,929.2 L1292.7,924.3 L1297.0,927.8 L1301.2,925.2 L1305.5,902.7 L1309.7,908.9 L1314.0,904.8 L1318.2,897.4 L1322.4,892.1 L1326.7,897.4 L1330.9,908.9 L1335.2,913.3 L1339.4,921.6 L1343.7,914.6 L1348.3,910.1 L1352.5,915.5 L1356.8,926.8 L1361.1,929.4 L1365.0,907.0 L1369.6,904.1 L1373.6,919.8 L1378.1,921.9 L1382.4,916.6 L1386.7,904.6 L1390.7,912.8 L1395.0,920.9 L1399.5,925.7 L1403.6,923.3 L1407.9,924.1 L1412.2,929.8 L1416.5,913.9 L1420.7,924.6 L1425.0,936.9 L1429.3,930.5 L1433.6,919.8 L1437.9,916.9 L1442.2,919.3 L1446.4,916.1 L1450.7,914.8 L1455.0,895.5 L1459.3,895.5 L1463.6,898.4 L1467.9,895.7 L1472.2,892.2 L1476.4,886.8 L1480.5,910.7 L1484.8,902.1 L1489.1,910.2 L1493.4,900.5 L1497.7,895.9 L1501.9,898.4 L1506.2,895.7 L1510.5,883.9 L1514.8,896.6 L1519.1,896.2 L1523.4,894.8 L1527.6,897.8 L1531.9,897.8 L1536.2,889.3 L1540.5,885.8 L1544.8,866.8 L1549.1,877.0 L1553.4,868.7 L1557.6,895.7 L1561.9,892.5 L1566.2,901.9 L1570.5,896.8 L1574.8,888.2 L1579.1,889.3 L1583.3,892.0 L1587.3,889.1" fill="none" stroke="#7a43e6" stroke-width="2.6" stroke-linejoin="round" stroke-linecap="round"/>
<line x1="1587.3" y1="889.1" x2="1591.1" y2="938.6" stroke="#7a43e6" stroke-opacity="0.45" stroke-width="2.6"/>
<circle cx="1591.1" cy="938.6" r="6" fill="#7a43e6"/>
<path d="M1104.2,964.6 L1113.6,963.2 L1121.9,810.7 L1126.1,827.0 L1130.4,798.7 L1134.8,812.0 L1139.0,832.3 L1143.3,823.1 L1147.5,833.2 L1151.8,825.8 L1156.0,785.4 L1160.4,810.2 L1164.7,936.7 L1168.9,937.9 L1173.2,928.3 L1177.6,935.8 L1181.8,936.7 L1186.1,919.0 L1190.3,926.0 L1194.6,877.9 L1198.8,893.9 L1203.1,888.0 L1207.3,880.4 L1211.7,892.8 L1216.0,887.7 L1220.2,903.9 L1224.5,957.5 L1228.7,957.9 L1233.0,958.8 L1241.4,957.0 L1245.7,949.0 L1249.9,953.5 L1254.2,945.5 L1262.8,947.3 L1267.1,952.2 L1271.3,948.2 L1275.6,948.7 L1279.8,943.7 L1284.2,945.2 L1301.2,941.6 L1305.5,922.2 L1309.7,926.9 L1322.4,911.0 L1326.7,914.6 L1330.9,927.8 L1335.2,929.6 L1339.4,936.7 L1348.3,921.6 L1352.5,927.8 L1356.8,930.5 L1361.1,933.2 L1365.0,921.9 L1369.6,919.3 L1373.6,925.7 L1378.1,928.4 L1382.4,924.6 L1386.7,912.3 L1390.7,922.5 L1395.0,930.0 L1399.5,932.1 L1403.6,930.0 L1407.9,930.0 L1412.2,933.2 L1416.5,925.2 L1420.7,931.6 L1425.0,941.2 L1429.3,936.4 L1433.6,931.6 L1437.9,930.0 L1442.2,930.0 L1446.4,926.8 L1450.7,928.9 L1455.0,910.7 L1459.3,911.6 L1463.6,911.8 L1467.9,915.5 L1472.2,916.6 L1476.4,912.0 L1480.5,925.2 L1484.8,919.8 L1489.1,926.8 L1493.4,920.3 L1497.7,915.0 L1501.9,914.5 L1506.2,913.1 L1510.5,903.7 L1514.8,912.8 L1519.1,911.8 L1523.4,909.1 L1527.6,911.2 L1531.9,913.4 L1536.2,906.4 L1540.5,903.7 L1544.8,892.0 L1549.1,894.6 L1553.4,895.2 L1557.6,912.3 L1561.9,910.5 L1566.2,913.9 L1570.5,910.2 L1574.8,904.8 L1579.1,907.0 L1583.3,905.6 L1587.3,905.9" fill="none" stroke="#f52f8d" stroke-width="2.6" stroke-linejoin="round" stroke-linecap="round"/>
<line x1="1587.3" y1="905.9" x2="1591.1" y2="943.4" stroke="#f52f8d" stroke-opacity="0.45" stroke-width="2.6"/>
<circle cx="1591.1" cy="943.4" r="6" fill="#f52f8d"/>
<path d="M1104.2,964.6 L1113.6,963.7 L1121.9,812.9 L1126.1,837.6 L1130.4,802.2 L1139.0,842.0 L1143.3,833.2 L1147.5,842.0 L1151.8,833.7 L1156.0,793.4 L1160.4,822.6 L1164.7,939.0 L1168.9,940.2 L1173.2,930.5 L1177.6,938.8 L1181.8,938.8 L1186.1,921.6 L1190.3,930.5 L1194.6,883.6 L1198.8,902.2 L1207.3,890.7 L1211.7,900.0 L1216.0,895.1 L1220.2,909.2 L1224.5,960.0 L1233.0,960.5 L1241.4,957.9 L1245.7,950.8 L1249.9,954.9 L1254.2,946.4 L1262.8,949.0 L1267.1,953.5 L1271.3,949.6 L1275.6,949.9 L1279.8,945.2 L1284.2,946.9 L1301.2,942.9 L1305.5,923.4 L1309.7,927.8 L1322.4,913.1 L1326.7,916.3 L1330.9,929.1 L1335.2,931.0 L1339.4,937.2 L1348.3,923.4 L1352.5,930.0 L1356.8,932.3 L1361.1,936.9 L1365.0,923.0 L1369.6,920.3 L1373.6,927.3 L1378.1,930.5 L1382.4,926.2 L1386.7,913.9 L1390.7,924.6 L1395.0,932.1 L1399.5,934.8 L1403.6,931.6 L1407.9,932.1 L1412.2,936.2 L1416.5,926.2 L1420.7,934.3 L1425.0,944.4 L1429.3,939.1 L1433.6,933.2 L1437.9,932.7 L1442.2,932.1 L1446.4,928.9 L1450.7,931.6 L1455.0,912.6 L1459.3,914.8 L1463.6,916.1 L1467.9,919.3 L1472.2,919.8 L1476.4,916.6 L1480.5,929.4 L1484.8,923.0 L1489.1,930.5 L1493.4,924.1 L1497.7,919.1 L1501.9,916.9 L1506.2,915.5 L1510.5,906.4 L1514.8,915.8 L1519.1,915.0 L1523.4,911.2 L1527.6,913.9 L1531.9,917.7 L1536.2,909.1 L1540.5,905.9 L1544.8,894.6 L1549.1,898.4 L1553.4,900.0 L1557.6,916.9 L1561.9,912.3 L1566.2,917.7 L1570.5,913.9 L1574.8,908.0 L1579.1,909.6 L1583.3,907.7 L1587.3,909.6" fill="none" stroke="#16b99a" stroke-width="2.6" stroke-linejoin="round" stroke-linecap="round"/>
<line x1="1587.3" y1="909.6" x2="1591.1" y2="947.7" stroke="#16b99a" stroke-opacity="0.45" stroke-width="2.6"/>
<circle cx="1591.1" cy="947.7" r="6" fill="#16b99a"/>
<path d="M1795.0,964.6 L1799.7,964.1 L1804.2,950.8 L1808.6,879.2 L1813.0,748.3 L1817.1,841.2 L1821.5,794.3 L1825.7,766.0 L1830.0,826.1 L1834.2,810.6 L1838.5,838.5 L1842.9,819.0 L1847.1,740.9 L1851.4,829.7 L1855.6,928.7 L1859.9,940.7 L1864.1,930.8 L1868.4,937.2 L1872.8,937.2 L1877.0,914.6 L1881.3,922.2 L1885.5,883.1 L1889.8,895.1 L1894.0,894.2 L1898.4,876.5 L1902.7,900.0 L1906.9,889.8 L1911.2,910.1 L1915.4,956.1 L1919.6,959.1 L1923.9,954.9 L1928.1,957.0 L1932.4,954.9 L1936.6,937.2 L1940.9,951.7 L1945.1,945.5 L1949.4,924.8 L1953.6,931.4 L1958.0,942.0 L1962.3,935.4 L1966.5,940.2 L1970.8,936.7 L1975.0,936.3 L1979.3,939.0 L1983.5,921.3 L1987.7,935.8 L1992.2,925.2 L1996.4,905.7 L2000.7,922.5 L2004.9,915.4 L2009.1,901.3 L2013.4,900.4 L2017.6,908.4 L2021.9,916.3 L2026.3,926.0 L2030.5,931.0 L2034.8,920.4 L2039.0,919.0 L2043.5,930.5 L2047.8,939.4 L2052.1,934.8 L2056.0,914.8 L2060.6,915.5 L2064.6,919.8 L2069.1,930.0 L2073.4,921.9 L2077.7,923.3 L2081.7,915.8 L2086.0,915.2 L2090.5,923.0 L2094.6,934.8 L2098.9,929.8 L2103.2,938.6 L2107.5,914.1 L2111.7,932.1 L2116.0,942.8 L2120.3,941.8 L2124.6,935.3 L2128.9,925.7 L2133.2,934.3 L2137.4,930.0 L2141.7,926.6 L2146.0,903.2 L2150.3,898.9 L2154.6,911.6 L2158.9,905.9 L2163.2,909.8 L2167.4,893.8 L2171.5,925.2 L2175.8,903.7 L2180.1,915.0 L2184.4,897.0 L2188.7,907.0 L2192.9,911.6 L2197.2,897.8 L2201.5,906.4 L2205.8,914.8 L2210.1,913.4 L2214.4,897.8 L2218.6,900.8 L2222.9,913.9 L2227.2,902.1 L2231.5,909.1 L2235.8,876.4 L2240.1,877.7 L2244.4,873.0 L2248.6,917.7 L2252.9,898.9 L2257.2,918.7 L2261.5,918.0 L2265.8,910.2 L2270.1,909.1 L2274.3,904.3 L2278.3,899.5" fill="none" stroke="#7a43e6" stroke-width="2.6" stroke-linejoin="round" stroke-linecap="round"/>
<line x1="2278.3" y1="899.5" x2="2282.1" y2="942.3" stroke="#7a43e6" stroke-opacity="0.45" stroke-width="2.6"/>
<circle cx="2282.1" cy="942.3" r="6" fill="#7a43e6"/>
<g fill="#99a4b7"><circle cx="1268.7" cy="1309" r="2.1"/><circle cx="1268.7" cy="1318.5" r="2.1"/><circle cx="1268.7" cy="1328" r="2.1"/></g>
<g fill="#99a4b7"><circle cx="2306" cy="1309" r="2.1"/><circle cx="2306" cy="1318.5" r="2.1"/><circle cx="2306" cy="1328" r="2.1"/></g>
<path d="M491.9,1391.1 L499.0,1373.8 L505.6,1354.5 L512.2,1373.0 L518.8,1375.4 L525.9,1380.0 L532.8,1380.0 L539.4,1379.6 L546.3,1381.2 L552.9,1380.4 L560.0,1380.0 L566.6,1378.4 L573.5,1377.9 L580.1,1383.2 L586.7,1380.0 L593.8,1384.0 L600.4,1381.5 L607.0,1379.9 L613.9,1382.0 L620.5,1379.2 L627.1,1383.2 L634.2,1380.0 L640.7,1382.5 L647.3,1381.7 L653.9,1380.0 L661.0,1382.5 L667.6,1382.0 L674.5,1382.9 L681.1,1379.9 L688.0,1385.8 L694.6,1377.1 L701.2,1380.7 L708.3,1371.3 L714.9,1367.5 L721.8,1373.0 L728.4,1371.8 L735.5,1364.7 L742.1,1354.0 L749.0,1361.8 L755.6,1357.6 L762.2,1371.3 L768.8,1367.5 L775.9,1370.0 L782.5,1376.3 L789.1,1367.2 L796.0,1361.4 L803.1,1361.4 L809.7,1368.0 L816.3,1376.3 L823.2,1376.3 L829.8,1373.0 L836.9,1375.4 L843.5,1379.2 L850.1,1379.2 L857.0,1383.2 L863.6,1385.0 L870.7,1382.0 L877.3,1383.3 L880.0,1383.7 L889.9,1385.0 L896.5,1383.2 L903.1,1382.0 L910.5,1381.5 L917.1,1383.2 L923.7,1383.7 L931.1,1382.0 L938.5,1384.8 L945.1,1382.0 L951.7,1382.4 L958.3,1382.5 L964.9,1384.2 L971.5,1383.3 L978.9,1384.2 L985.5,1382.0 L992.1,1383.2 L998.7,1382.5 L1006.1,1385.0 L1012.7,1382.0 L1019.3,1382.5 L1026.7,1384.5 L1033.3,1384.5 L1039.9,1381.2 L1046.5,1380.9 L1053.1,1380.9 L1059.6,1383.2 L1066.2,1379.2 L1072.8,1377.1 L1079.9,1371.8 L1086.8,1383.7 L1093.4,1378.7 L1100.0,1377.1 L1107.4,1377.9 L1114.0,1380.4 L1120.6,1382.0 L1127.2,1381.7 L1134.6,1382.5 L1141.2,1380.4 L1147.8,1380.0 L1154.4,1380.4 L1161.0,1384.5 L1167.6,1383.2 L1174.2,1382.5 L1181.6,1382.0 L1188.2,1381.2 L1194.8,1379.9 L1201.4,1380.0 L1208.0,1383.7 L1214.6,1381.2 L1222.0,1384.5 L1228.6,1383.7 L1235.2,1383.2 L1241.8,1381.7 L1248.4,1381.7 L1254.9,1381.2 L1262.0,1380.0 L1262.0,1400 L491.9,1400 Z" fill="url(#spf)"/>
<path d="M491.9,1391.1 L499.0,1373.8 L505.6,1354.5 L512.2,1373.0 L518.8,1375.4 L525.9,1380.0 L532.8,1380.0 L539.4,1379.6 L546.3,1381.2 L552.9,1380.4 L560.0,1380.0 L566.6,1378.4 L573.5,1377.9 L580.1,1383.2 L586.7,1380.0 L593.8,1384.0 L600.4,1381.5 L607.0,1379.9 L613.9,1382.0 L620.5,1379.2 L627.1,1383.2 L634.2,1380.0 L640.7,1382.5 L647.3,1381.7 L653.9,1380.0 L661.0,1382.5 L667.6,1382.0 L674.5,1382.9 L681.1,1379.9 L688.0,1385.8 L694.6,1377.1 L701.2,1380.7 L708.3,1371.3 L714.9,1367.5 L721.8,1373.0 L728.4,1371.8 L735.5,1364.7 L742.1,1354.0 L749.0,1361.8 L755.6,1357.6 L762.2,1371.3 L768.8,1367.5 L775.9,1370.0 L782.5,1376.3 L789.1,1367.2 L796.0,1361.4 L803.1,1361.4 L809.7,1368.0 L816.3,1376.3 L823.2,1376.3 L829.8,1373.0 L836.9,1375.4 L843.5,1379.2 L850.1,1379.2 L857.0,1383.2 L863.6,1385.0 L870.7,1382.0 L877.3,1383.3 L880.0,1383.7 L889.9,1385.0 L896.5,1383.2 L903.1,1382.0 L910.5,1381.5 L917.1,1383.2 L923.7,1383.7 L931.1,1382.0 L938.5,1384.8 L945.1,1382.0 L951.7,1382.4 L958.3,1382.5 L964.9,1384.2 L971.5,1383.3 L978.9,1384.2 L985.5,1382.0 L992.1,1383.2 L998.7,1382.5 L1006.1,1385.0 L1012.7,1382.0 L1019.3,1382.5 L1026.7,1384.5 L1033.3,1384.5 L1039.9,1381.2 L1046.5,1380.9 L1053.1,1380.9 L1059.6,1383.2 L1066.2,1379.2 L1072.8,1377.1 L1079.9,1371.8 L1086.8,1383.7 L1093.4,1378.7 L1100.0,1377.1 L1107.4,1377.9 L1114.0,1380.4 L1120.6,1382.0 L1127.2,1381.7 L1134.6,1382.5 L1141.2,1380.4 L1147.8,1380.0 L1154.4,1380.4 L1161.0,1384.5 L1167.6,1383.2 L1174.2,1382.5 L1181.6,1382.0 L1188.2,1381.2 L1194.8,1379.9 L1201.4,1380.0 L1208.0,1383.7 L1214.6,1381.2 L1222.0,1384.5 L1228.6,1383.7 L1235.2,1383.2 L1241.8,1381.7 L1248.4,1381.7 L1254.9,1381.2 L1262.0,1380.0" fill="none" stroke="#7a43e6" stroke-width="2.6" stroke-linejoin="round" stroke-linecap="round"/>
<circle cx="1262.0" cy="1380.0" r="6" fill="#7a43e6"/>
<path d="M1487.3,1391.0 L1494.7,1384.1 L1501.6,1353.5 L1508.9,1373.7 L1515.8,1374.3 L1523.3,1379.8 L1530.2,1378.9 L1537.4,1376.0 L1544.4,1379.8 L1551.3,1378.9 L1558.7,1380.3 L1565.7,1378.9 L1572.9,1376.7 L1580.4,1381.2 L1587.3,1381.2 L1594.6,1383.3 L1602.0,1381.9 L1608.9,1382.9 L1615.8,1382.6 L1622.8,1380.7 L1629.7,1380.3 L1636.6,1380.7 L1644.4,1381.0 L1651.3,1380.7 L1658.2,1379.1 L1665.2,1380.8 L1672.1,1380.1 L1679.9,1381.0 L1686.8,1383.6 L1694.6,1385.9 L1701.5,1381.0 L1708.8,1385.3 L1716.2,1383.8 L1723.1,1378.1 L1730.0,1384.1 L1737.0,1382.4 L1744.2,1375.1 L1751.3,1376.9 L1758.6,1379.5 L1765.5,1378.1 L1772.8,1381.2 L1780.2,1380.8 L1787.1,1380.3 L1794.1,1380.8 L1801.5,1375.5 L1808.4,1380.1 L1815.7,1376.3 L1822.6,1376.9 L1829.5,1380.3 L1836.8,1379.5 L1844.2,1377.2 L1851.2,1378.1 L1858.1,1378.6 L1865.0,1378.4 L1871.9,1380.8 L1878.9,1380.1 L1885.8,1378.4 L1892.7,1378.6 L1895.0,1378.9 L1901.9,1381.2 L1908.8,1381.5 L1915.8,1378.1 L1922.7,1378.1 L1930.5,1379.3 L1937.4,1376.3 L1944.3,1379.5 L1951.2,1378.1 L1958.7,1381.2 L1965.9,1377.2 L1972.9,1374.6 L1979.8,1375.1 L1986.7,1381.0 L1993.6,1378.4 L2000.9,1380.5 L2008.3,1376.3 L2015.3,1379.5 L2023.0,1379.5 L2030.0,1381.5 L2036.9,1381.9 L2043.8,1378.9 L2051.6,1381.5 L2058.5,1380.8 L2065.4,1380.1 L2072.4,1378.1 L2079.3,1377.2 L2086.2,1379.8 L2094.0,1378.4 L2100.9,1380.7 L2107.8,1377.5 L2114.8,1380.7 L2121.7,1376.9 L2129.5,1377.7 L2136.4,1375.5 L2143.3,1378.9 L2150.2,1379.5 L2158.0,1376.9 L2164.9,1380.7 L2171.9,1380.7 L2179.7,1380.3 L2186.6,1376.9 L2193.5,1376.9 L2200.4,1380.1 L2208.2,1378.9 L2215.1,1381.2 L2222.0,1377.7 L2229.8,1376.3 L2236.8,1376.9 L2243.7,1381.2 L2250.6,1377.7 L2257.5,1380.7 L2264.4,1381.2 L2271.4,1380.8 L2278.3,1380.7 L2285.2,1378.9 L2293.0,1378.1 L2300.4,1378.1 L2300.4,1400 L1487.3,1400 Z" fill="url(#spf)"/>
<path d="M1487.3,1391.0 L1494.7,1384.1 L1501.6,1353.5 L1508.9,1373.7 L1515.8,1374.3 L1523.3,1379.8 L1530.2,1378.9 L1537.4,1376.0 L1544.4,1379.8 L1551.3,1378.9 L1558.7,1380.3 L1565.7,1378.9 L1572.9,1376.7 L1580.4,1381.2 L1587.3,1381.2 L1594.6,1383.3 L1602.0,1381.9 L1608.9,1382.9 L1615.8,1382.6 L1622.8,1380.7 L1629.7,1380.3 L1636.6,1380.7 L1644.4,1381.0 L1651.3,1380.7 L1658.2,1379.1 L1665.2,1380.8 L1672.1,1380.1 L1679.9,1381.0 L1686.8,1383.6 L1694.6,1385.9 L1701.5,1381.0 L1708.8,1385.3 L1716.2,1383.8 L1723.1,1378.1 L1730.0,1384.1 L1737.0,1382.4 L1744.2,1375.1 L1751.3,1376.9 L1758.6,1379.5 L1765.5,1378.1 L1772.8,1381.2 L1780.2,1380.8 L1787.1,1380.3 L1794.1,1380.8 L1801.5,1375.5 L1808.4,1380.1 L1815.7,1376.3 L1822.6,1376.9 L1829.5,1380.3 L1836.8,1379.5 L1844.2,1377.2 L1851.2,1378.1 L1858.1,1378.6 L1865.0,1378.4 L1871.9,1380.8 L1878.9,1380.1 L1885.8,1378.4 L1892.7,1378.6 L1895.0,1378.9 L1901.9,1381.2 L1908.8,1381.5 L1915.8,1378.1 L1922.7,1378.1 L1930.5,1379.3 L1937.4,1376.3 L1944.3,1379.5 L1951.2,1378.1 L1958.7,1381.2 L1965.9,1377.2 L1972.9,1374.6 L1979.8,1375.1 L1986.7,1381.0 L1993.6,1378.4 L2000.9,1380.5 L2008.3,1376.3 L2015.3,1379.5 L2023.0,1379.5 L2030.0,1381.5 L2036.9,1381.9 L2043.8,1378.9 L2051.6,1381.5 L2058.5,1380.8 L2065.4,1380.1 L2072.4,1378.1 L2079.3,1377.2 L2086.2,1379.8 L2094.0,1378.4 L2100.9,1380.7 L2107.8,1377.5 L2114.8,1380.7 L2121.7,1376.9 L2129.5,1377.7 L2136.4,1375.5 L2143.3,1378.9 L2150.2,1379.5 L2158.0,1376.9 L2164.9,1380.7 L2171.9,1380.7 L2179.7,1380.3 L2186.6,1376.9 L2193.5,1376.9 L2200.4,1380.1 L2208.2,1378.9 L2215.1,1381.2 L2222.0,1377.7 L2229.8,1376.3 L2236.8,1376.9 L2243.7,1381.2 L2250.6,1377.7 L2257.5,1380.7 L2264.4,1381.2 L2271.4,1380.8 L2278.3,1380.7 L2285.2,1378.9 L2293.0,1378.1 L2300.4,1378.1" fill="none" stroke="#7a43e6" stroke-width="2.6" stroke-linejoin="round" stroke-linecap="round"/>
<circle cx="2300.4" cy="1378.1" r="6" fill="#7a43e6"/>
<path d="M2412.5,15 L2416,11.5 L2419.5,15" fill="none" stroke="#505560" stroke-width="1.6"/><path d="M2412.5,1455 L2416,1458.5 L2419.5,1455" fill="none" stroke="#505560" stroke-width="1.6"/>
</svg>
</body></html>
